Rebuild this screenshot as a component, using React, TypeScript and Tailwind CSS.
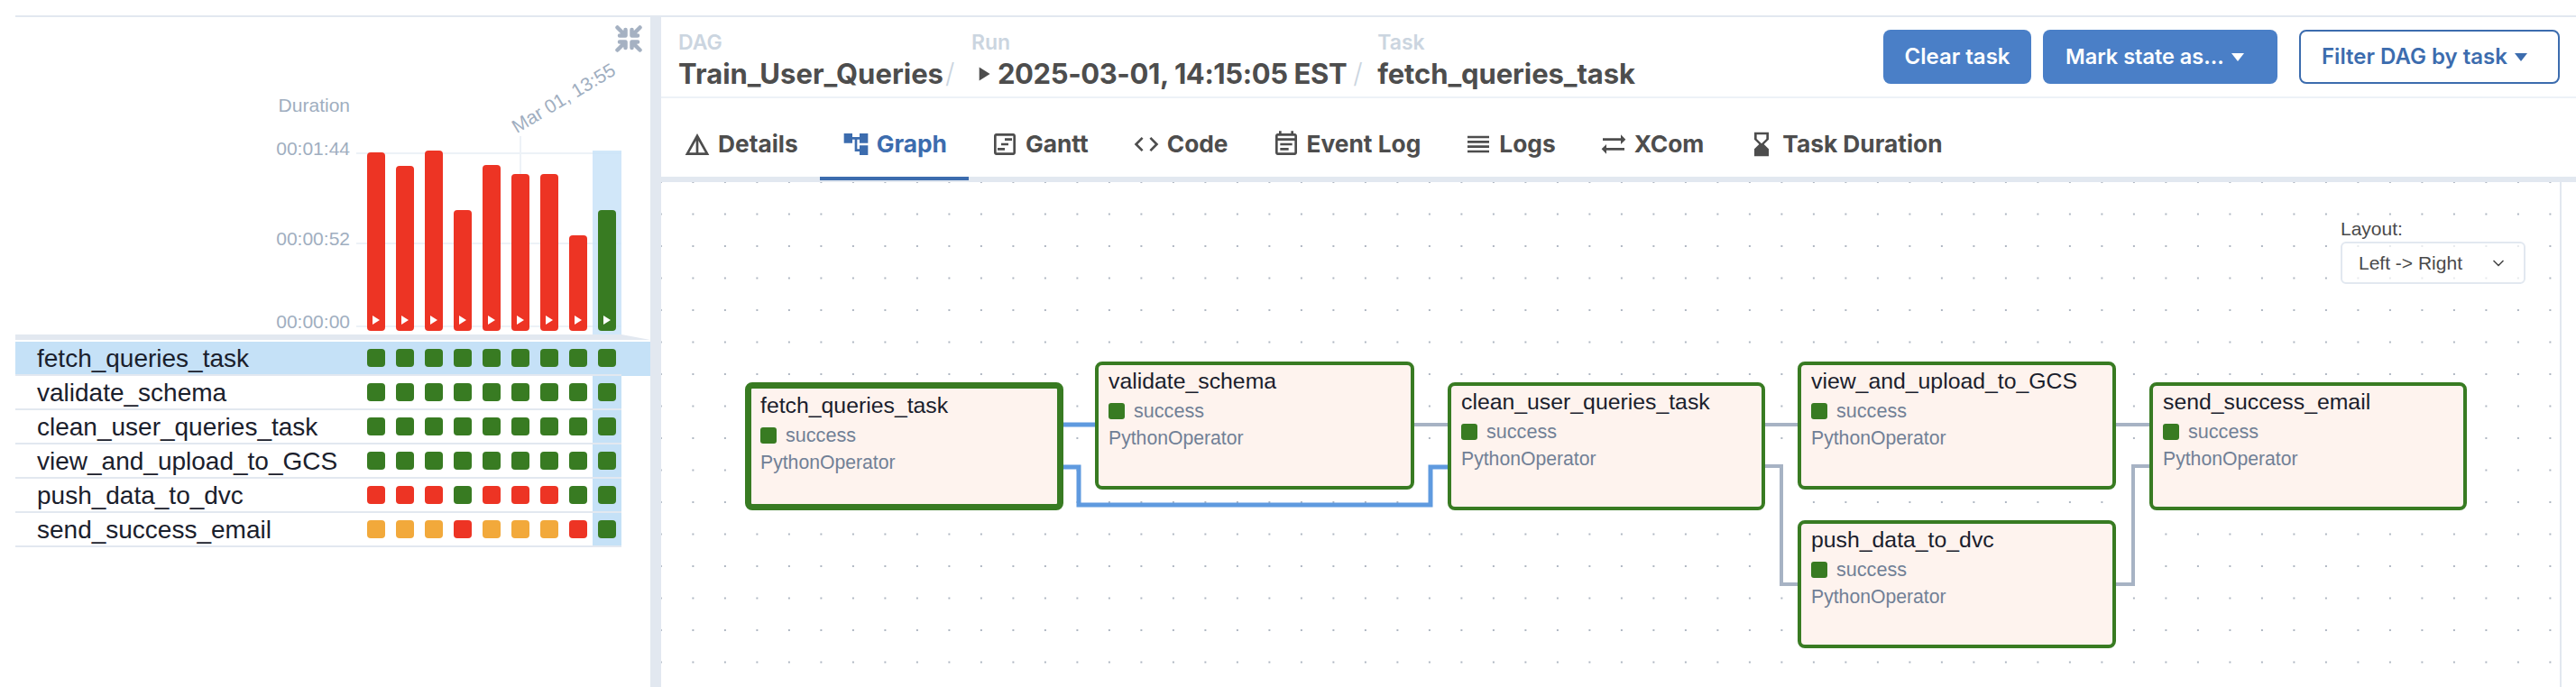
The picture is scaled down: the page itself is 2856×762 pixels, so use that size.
import type { ReactNode } from "react"
import {
  MdAccountTree,
  MdCode,
  MdDetails,
  MdHourglassBottom,
  MdOutlineEventNote,
  MdOutlineViewTimeline,
  MdPlayArrow,
  MdReorder,
  MdSyncAlt,
} from "react-icons/md"
import { ChevronDown } from "lucide-react"

type State = "g" | "r" | "o"

const stateColor: Record<State, string> = {
  g: "bg-[#387b22]",
  r: "bg-[#ed3424]",
  o: "bg-[#f2a93b]",
}

const bars: { height: string; state: State }[] = [
  { height: "h-[198px]", state: "r" },
  { height: "h-[183px]", state: "r" },
  { height: "h-[200px]", state: "r" },
  { height: "h-[134px]", state: "r" },
  { height: "h-[184px]", state: "r" },
  { height: "h-[174px]", state: "r" },
  { height: "h-[174px]", state: "r" },
  { height: "h-[106px]", state: "r" },
  { height: "h-[134px]", state: "g" },
]

const rows: { name: string; states: State[] }[] = [
  { name: "fetch_queries_task", states: ["g", "g", "g", "g", "g", "g", "g", "g", "g"] },
  { name: "validate_schema", states: ["g", "g", "g", "g", "g", "g", "g", "g", "g"] },
  { name: "clean_user_queries_task", states: ["g", "g", "g", "g", "g", "g", "g", "g", "g"] },
  { name: "view_and_upload_to_GCS", states: ["g", "g", "g", "g", "g", "g", "g", "g", "g"] },
  { name: "push_data_to_dvc", states: ["r", "r", "r", "g", "r", "r", "r", "g", "g"] },
  { name: "send_success_email", states: ["o", "o", "o", "r", "o", "o", "o", "r", "g"] },
]

const tabs = [
  { label: "Details", icon: MdDetails },
  { label: "Graph", icon: MdAccountTree, active: true },
  { label: "Gantt", icon: MdOutlineViewTimeline },
  { label: "Code", icon: MdCode },
  { label: "Event Log", icon: MdOutlineEventNote },
  { label: "Logs", icon: MdReorder },
  { label: "XCom", icon: MdSyncAlt },
  { label: "Task Duration", icon: MdHourglassBottom },
]

const nodes = [
  { name: "fetch_queries_task", pos: "left-[93px] top-[222px] w-[353px] h-[142px]", selected: true },
  { name: "validate_schema", pos: "left-[481px] top-[199px] w-[354px] h-[142px]" },
  { name: "clean_user_queries_task", pos: "left-[872px] top-[222px] w-[352px] h-[142px]" },
  { name: "view_and_upload_to_GCS", pos: "left-[1260px] top-[199px] w-[353px] h-[142px]" },
  { name: "push_data_to_dvc", pos: "left-[1260px] top-[375px] w-[353px] h-[142px]" },
  { name: "send_success_email", pos: "left-[1650px] top-[222px] w-[352px] h-[142px]" },
]

function Caret({ className }: { className: string }) {
  return (
    <svg viewBox="0 0 14 9" className={`h-[9px] w-3.5 ${className}`}>
      <polygon points="0,0 14,0 7,9" fill="currentColor" />
    </svg>
  )
}

function CollapseIcon() {
  return (
    <svg
      viewBox="0 0 30 30"
      className="absolute left-[665px] top-[9px] h-[30px] w-[30px] text-[#a5b1c2]"
      fill="none"
      stroke="currentColor"
      strokeWidth="4.5"
      strokeLinejoin="round"
      strokeLinecap="round"
    >
      <path d="M2.5 2.5L11 11M11.5 5V11.5H5" />
      <path d="M27.5 2.5L19 11M18.5 5V11.5H25" />
      <path d="M2.5 27.5L11 19M11.5 25V18.5H5" />
      <path d="M27.5 27.5L19 19M18.5 25V18.5H25" />
    </svg>
  )
}

function Crumb({ label, children }: { label: string; children: ReactNode }) {
  return (
    <div className="flex flex-col">
      <span className="h-[24px] text-[23px] leading-[24px] font-semibold text-[#cbd5e0]">{label}</span>
      <span className="mt-[5px] flex h-[36px] items-center text-[31px] leading-[36px] font-bold text-[#4d4d4d]">
        {children}
      </span>
    </div>
  )
}

function DagNode({ name, pos, selected }: { name: string; pos: string; selected?: boolean }) {
  return (
    <div
      className={`absolute flex flex-col gap-1.5 rounded-lg border-[#387b22] bg-[#fef3ee] ${pos} ${
        selected ? "border-[7px] pt-1 pl-2.5" : "border-4 pt-[3px] pl-[11px]"
      }`}
    >
      <div className="h-[30px] text-[24.8px] leading-[30px] text-[#1a202c]">{name}</div>
      <div className="flex h-6 items-center gap-2.5 text-[21.6px] leading-6 text-[#718096]">
        <span className="h-[18px] w-[18px] rounded-[3px] bg-[#387b22]" />
        success
      </div>
      <div className="h-6 text-[21.2px] leading-6 text-[#718096]">PythonOperator</div>
    </div>
  )
}

export default function App() {
  return (
    <div className="h-[762px] w-[2856px] overflow-hidden bg-white pt-[17px] pl-[17px] font-['Liberation_Sans',sans-serif]">
      <div className="flex h-[745px] border-t-2 border-[#e2e8f0]">
        {/* grid */}
        <div className="w-[704px]">
          <div className="relative h-[352px]">
            <CollapseIcon />
            <div className="absolute left-0 top-[86px] w-[371px] text-right text-[21px] leading-6 text-[#a0aec0]">Duration</div>
            <div className="absolute left-0 top-[134px] w-[371px] text-right text-[21px] leading-6 text-[#a0aec0]">00:01:44</div>
            <div className="absolute left-0 top-[234px] w-[371px] text-right text-[21px] leading-6 text-[#a0aec0]">00:00:52</div>
            <div className="absolute left-0 top-[326px] w-[371px] text-right text-[21px] leading-6 text-[#a0aec0]">00:00:00</div>
            <div className="absolute left-[608px] top-[90px] -translate-x-1/2 -translate-y-1/2 -rotate-[31deg] text-[21px] leading-6 whitespace-nowrap text-[#a0aec0]">
              Mar 01, 13:55
            </div>
            <div className="absolute left-[378px] top-[150px] h-0.5 w-[294px] bg-[#edf2f7]" />
            <div className="absolute left-[378px] top-[250px] h-0.5 w-[294px] bg-[#edf2f7]" />
            <div className="absolute left-[378px] top-[342px] h-0.5 w-[294px] bg-[#edf2f7]" />
            <div className="absolute left-[559px] top-[132px] h-[60px] w-0.5 bg-[#edf2f7]" />
            <div className="absolute bottom-0 left-[384px] flex items-end">
              {bars.map((bar, i) => (
                <div
                  key={i}
                  className={`flex h-[204px] w-8 items-end px-1.5 pb-1 ${i === bars.length - 1 ? "bg-[#c5e1f7]/80" : ""}`}
                >
                  <div className={`flex w-5 items-end justify-center rounded-[4px] pb-[7px] ${stateColor[bar.state]} ${bar.height}`}>
                    <svg viewBox="0 0 8 10" className="h-2.5 w-2">
                      <polygon points="0,0 8,5 0,10" fill="white" />
                    </svg>
                  </div>
                </div>
              ))}
            </div>
          </div>

          <div className="flex h-1.5">
            <div className="w-[672px] bg-[#e2e8f0]" />
            <div className="w-8 bg-[#e2e8f0] [clip-path:polygon(0_0,100%_100%,0_100%)]" />
          </div>
          <div className="mt-0.5">
            {rows.map((row, r) => (
              <div key={row.name} className={r === 0 ? "bg-[#c5e1f7]" : ""}>
                <div className="flex h-[38px] w-[672px] border-b-2 border-[#e2e8f0] pt-2">
                  <div className="-mt-2 h-9 w-[384px] pl-6 text-[28px] leading-[38px] text-[#1a202c]">{row.name}</div>
                  {row.states.map((s, i) => (
                    <div
                      key={i}
                      className={`-mt-2 h-9 w-8 px-1.5 pt-2 ${i === 8 && r > 0 ? "bg-[#c5e1f7]" : ""}`}
                    >
                      <div className={`h-5 w-5 rounded-[4px] ${stateColor[s]}`} />
                    </div>
                  ))}
                </div>
              </div>
            ))}
          </div>
        </div>

        <div className="w-3 bg-[#e2e8f0]" />

        {/* task details */}
        <div className="flex flex-1 flex-col font-['Inter',sans-serif]">
          <div className="flex h-[90px] shrink-0 items-start justify-between border-b-2 border-[#edf2f7] pr-[18px]">
            <div className="flex pt-4 pl-[19px]">
              <Crumb label="DAG">Train_User_Queries</Crumb>
              <span className="mt-[28px] ml-[2px] w-[29px] text-[30px] leading-[36px] font-light text-[#cbd5e0]">/</span>
              <Crumb label="Run">
                <MdPlayArrow className="mr-[3px] h-[26px] w-[26px]" />
                <span className="tracking-[-0.4px]">2025-03-01, 14:15:05 EST</span>
              </Crumb>
              <span className="mt-[28px] ml-[7px] w-[27px] text-[30px] leading-[36px] font-light text-[#cbd5e0]">/</span>
              <Crumb label="Task">
                <span className="tracking-[-0.1px]">fetch_queries_task</span>
              </Crumb>
            </div>
            <div className="flex pt-3.5">
              <button className="h-[60px] w-[164px] rounded-lg bg-[#4a7fc7] text-[24px] font-semibold text-white">Clear task</button>
              <button className="ml-[13px] flex h-[60px] w-[260px] items-center gap-2 rounded-lg bg-[#4a7fc7] pl-[25px] text-[23.5px] font-semibold text-white">
                Mark state as...
                <Caret className="text-white" />
              </button>
              <button className="ml-6 flex h-[60px] w-[289px] items-center gap-2 rounded-lg border-2 border-[#3c6cae] pl-[23px] text-[24px] font-semibold text-[#3c6cae]">
                Filter DAG by task
                <Caret className="text-[#3c6cae]" />
              </button>
            </div>
          </div>

          <div className="flex h-[87px] shrink-0">
            {tabs.map(({ label, icon: Icon, active }) => (
              <div
                key={label}
                className={`relative flex items-center gap-[7px] px-6 pt-[14px] text-[26.3px] font-bold ${active ? "text-[#3c6cae]" : "text-[#4d4d4d]"}`}
              >
                <Icon className="h-8 w-8" />
                {label}
                {active && <span className="absolute inset-x-0 -bottom-1 h-1 bg-[#3c6cae]" />}
              </div>
            ))}
          </div>
          <div className="h-1.5 shrink-0 bg-[#e2e8f0]" />

          <div className="relative mr-4 flex-1 border-r-2 border-[#e2e8f0] bg-[radial-gradient(#aeb6c2_1.1px,transparent_1.2px)] bg-size-[35.5px_35.5px] bg-position-[17.65px_-17.75px] font-['Liberation_Sans',sans-serif]">
            <svg viewBox="733 202 2107 560" className="absolute inset-0 h-[560px] w-[2107px]" fill="none">
              <g stroke="#a7b3c4" strokeWidth="4">
                <path d="M1568 471H1605" />
                <path d="M1957 471H1993" />
                <path d="M1957 517H1975V648H1993" />
                <path d="M2346 471H2383" />
                <path d="M2346 648H2365V517H2383" />
              </g>
              <g stroke="#5f9adf" strokeWidth="5">
                <path d="M1179 471H1214" />
                <path d="M1179 518H1196V560H1586V518H1605" />
              </g>
            </svg>
            {nodes.map((n) => (
              <DagNode key={n.name} {...n} />
            ))}
            <div className="absolute left-[1862px] top-[40px] w-[205px]">
              <div className="h-6 text-[21px] leading-6 text-[#4a4a4a]">Layout:</div>
              <div className="mt-0.5 flex h-[47px] items-center justify-between rounded-md border-2 border-[#e2e8f0] bg-white/70 pr-[18px] pl-[18px] text-[21px] text-[#4a4a4a]">
                Left -&gt; Right
                <ChevronDown className="h-5 w-5" />
              </div>
            </div>
          </div>
        </div>
      </div>
    </div>
  )
}
